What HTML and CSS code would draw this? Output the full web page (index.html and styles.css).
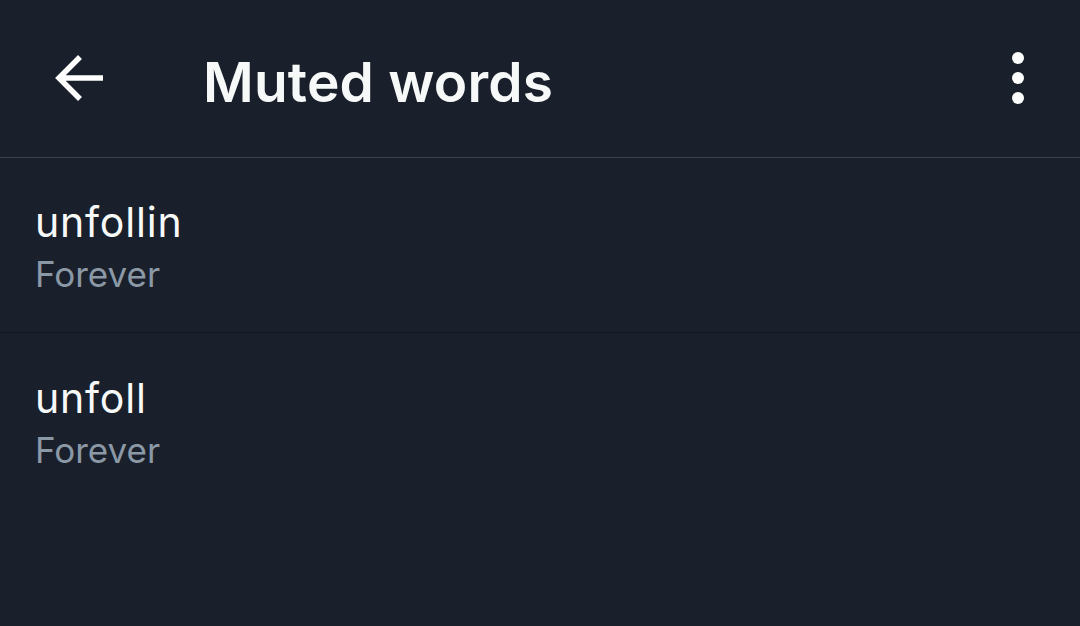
FILE: index.html
```html
<!DOCTYPE html>
<html lang="en">
<head>
  <meta charset="UTF-8">
  <meta name="viewport" content="width=device-width, initial-scale=1.0">
  <title>Muted words</title>
  <link rel="stylesheet" href="styles.css">
</head>
<body>
  <header class="topbar">
    <button class="icon-btn back" aria-label="Back">
      <svg width="52" height="52" viewBox="0 0 52 52">
        <path d="M26 4 L5 25 L26 46 M5 25 H49" fill="none" stroke="#fff" stroke-width="5.5"/>
      </svg>
    </button>
    <h1 class="title">Muted words</h1>
    <button class="icon-btn more" aria-label="More">
      <svg width="14" height="54" viewBox="0 0 14 54">
        <circle cx="7" cy="7" r="6" fill="#fff"/>
        <circle cx="7" cy="27" r="6" fill="#fff"/>
        <circle cx="7" cy="47" r="6" fill="#fff"/>
      </svg>
    </button>
  </header>

  <ul class="word-list">
    <li class="word-row">
      <div class="word">unfollin</div>
      <div class="duration">Forever</div>
    </li>
    <li class="word-row">
      <div class="word">unfoll</div>
      <div class="duration">Forever</div>
    </li>
  </ul>
</body>
</html>
```

FILE: styles.css
```css
body {
  margin: 0;
  background-color: #19202b;
  color: #f7f9f9;
  font-family: Inter, "Noto Sans", sans-serif;
  height: 626px;
  overflow: hidden;
}
.topbar {
  display: flex;
  align-items: center;
  height: 157px;
  border-bottom: 1px solid #3b424c;
  padding: 0 55px 0 54px;
}
.icon-btn {
  background: none;
  border: none;
  padding: 0;
  display: flex;
  cursor: pointer;
}
.back {
  margin-right: 97px;
}
.title {
  flex: 1;
  margin: 0;
  font-size: 55px;
  font-weight: 600;
  letter-spacing: 0.2px;
  padding-top: 6px;
}
.more {
  margin-bottom: 2px;
}
.word-list {
  list-style: none;
  margin: 0;
  padding: 0;
}
.word-row {
  height: 175px;
  padding: 6px 35px 0;
  box-sizing: border-box;
  display: flex;
  flex-direction: column;
  justify-content: center;
  border-bottom: 1px solid #10151c;
}
.word-row:last-child {
  border-bottom: none;
}
.word {
  font-size: 41px;
  line-height: 52px;
  letter-spacing: 0.8px;
}
.duration {
  font-size: 35px;
  line-height: 52px;
  color: #8b98a5;
}
```
